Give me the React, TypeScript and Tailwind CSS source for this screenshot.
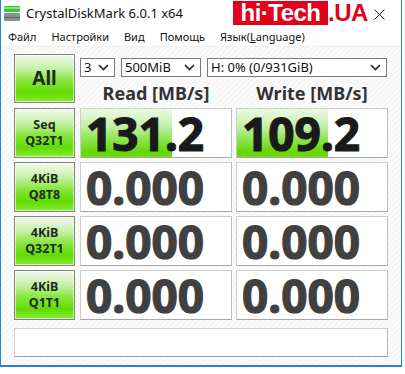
import React from 'react';

const font = { fontFamily: '"Noto Sans", "Open Sans", sans-serif' };

function Chevron() {
    return (
        <svg width="11" height="7" viewBox="0 0 11 7" className="shrink-0">
            <path d="M1 1 L5.5 5.5 L10 1" fill="none" stroke="#222" strokeWidth="1.6" />
        </svg>
    );
}

function Select({ label, w }: { label: string; w: string }) {
    return (
        <div className={`${w} h-[19px] bg-white border border-[#7a7a7a] flex items-center justify-between pl-[3px] pr-[5px] text-[13px] text-[#111] leading-none`}>
            <span>{label}</span>
            <Chevron />
        </div>
    );
}

function TestButton({ lines, big }: { lines: string[]; big?: boolean }) {
    return (
        <div className="w-[61px] h-full border border-[#7d877d] shadow-[inset_0_0_0_1px_rgba(255,255,255,0.6)] bg-[linear-gradient(to_bottom,#f4f9f0_0%,#c4f0a4_30%,#86e63c_55%,#62dc00_80%,#86ea38_100%)] flex flex-col items-center justify-center font-bold text-[#1e2a1e]">
            {big ? (
                <span className="text-[19px] leading-none">{lines[0]}</span>
            ) : (
                lines.map((l) => (
                    <span key={l} className="text-[12.5px] leading-[16px]">{l}</span>
                ))
            )}
        </div>
    );
}

function ResultBox({ value, bar }: { value: string; bar?: boolean }) {
    return (
        <div className="relative w-[152px] h-full bg-white border border-[#cdcdcd] border-b-[#a8a8a8] border-r-[#bdbdbd] flex items-center">
            {bar && (
                <div className="absolute left-0 top-0 bottom-0 w-[91px] bg-[linear-gradient(to_bottom,#eef9e8_0%,#c6f0a8_35%,#8ae44a_65%,#64d800_90%,#70dc10_100%)]" />
            )}
            <span className={`relative pl-[5px] text-[46px] font-bold leading-[40px] [-webkit-text-stroke-width:1.2px] ${bar ? 'text-[#1a1a1a]' : 'text-[#404040]'}`}>
                {value}
            </span>
        </div>
    );
}

export default function App() {
    const rows = [
        { lines: ['Seq', 'Q32T1'], read: '131.2', write: '109.2', bar: true },
        { lines: ['4KiB', 'Q8T8'], read: '0.000', write: '0.000', bar: false },
        { lines: ['4KiB', 'Q32T1'], read: '0.000', write: '0.000', bar: false },
        { lines: ['4KiB', 'Q1T1'], read: '0.000', write: '0.000', bar: false },
    ];

    return (
        <div style={font} className="w-[405px] h-[374px] bg-white overflow-hidden">
            <div className="w-[402px] h-[367px] border-x border-b-2 border-[#2386d0] flex flex-col">
                {/* Title bar */}
                <div className="h-[28px] flex items-center bg-white relative">
                    <svg width="16" height="16" viewBox="0 0 16 16" className="ml-[3px] mr-[6px]">
                        <rect x="0" y="0" width="16" height="6" rx="1" fill="#3cc83c" />
                        <rect x="0" y="1" width="16" height="2" fill="#7ee87e" />
                        <rect x="0" y="7" width="16" height="8" rx="1" fill="#8a8f94" />
                        <rect x="0" y="11" width="16" height="1" fill="#5e6368" />
                        <rect x="11" y="12.5" width="3" height="1.5" fill="#2fd02f" />
                    </svg>
                    <span className="text-[13px] text-[#111] leading-none -mt-[2px]">CrystalDiskMark 6.0.1 x64</span>
                    <div className="absolute left-[232px] top-[1px] flex items-center">
                        <div className="h-[24px] w-[95px] bg-[#e3001b] flex items-center justify-center">
                            <span className="text-white font-bold text-[24px] leading-none tracking-[-0.5px]" style={{ fontFamily: '"Liberation Sans", Arial, sans-serif' }}>hi·Tech</span>
                        </div>
                        <span className="text-[#e3001b] font-bold text-[24px] leading-none tracking-[-0.5px]" style={{ fontFamily: '"Liberation Sans", Arial, sans-serif' }}>.UA</span>
                    </div>
                    <svg width="11" height="11" viewBox="0 0 11 11" className="absolute left-[373px] top-[9px]">
                        <path d="M0.5 0.5 L10.5 10.5 M10.5 0.5 L0.5 10.5" stroke="#222" strokeWidth="1" />
                    </svg>
                </div>

                {/* Menu bar */}
                <div className="h-[19px] flex items-center text-[11px] text-[#111] pl-[7px] gap-[15px] border-b border-[#f0f0f0]">
                    <span>Файл</span>
                    <span>Настройки</span>
                    <span>Вид</span>
                    <span>Помощь</span>
                    <span>Язык(<span className="underline">L</span>anguage)</span>
                </div>

                {/* Client area */}
                <div className="flex-1 bg-[repeating-linear-gradient(135deg,#f6f6f6_0px,#f6f6f6_2px,#fcfcfc_2px,#fcfcfc_4px)] pl-[13px] pt-[7px] flex flex-col">
                    <div className="flex h-[49px] gap-[5px]">
                        <TestButton lines={['All']} big />
                        <div className="flex flex-col">
                            <div className="flex gap-[6px] mt-[4px]">
                                <Select label="3" w="w-[35px]" />
                                <Select label="500MiB" w="w-[80px]" />
                                <Select label="H: 0% (0/931GiB)" w="w-[180px]" />
                            </div>
                            <div className="flex gap-[4px] mt-[7px] text-[18px] font-bold text-[#333] leading-none">
                                <div className="w-[152px] text-center">Read [MB/s]</div>
                                <div className="w-[152px] text-center">Write [MB/s]</div>
                            </div>
                        </div>
                    </div>

                    <div className="flex flex-col gap-[4px] mt-[5px]">
                        {rows.map((r, i) => (
                            <div key={i} className="flex h-[50px] gap-[5px]">
                                <TestButton lines={r.lines} />
                                <div className="flex gap-[4px]">
                                    <ResultBox value={r.read} bar={r.bar} />
                                    <ResultBox value={r.write} bar={r.bar} />
                                </div>
                            </div>
                        ))}
                    </div>

                    <div className="mt-[8px] w-[374px] h-[29px] bg-white border border-[#cfcfcf] border-b-[#a0a0a0] border-r-[#b8b8b8]" />
                </div>
            </div>
        </div>
    );
}
